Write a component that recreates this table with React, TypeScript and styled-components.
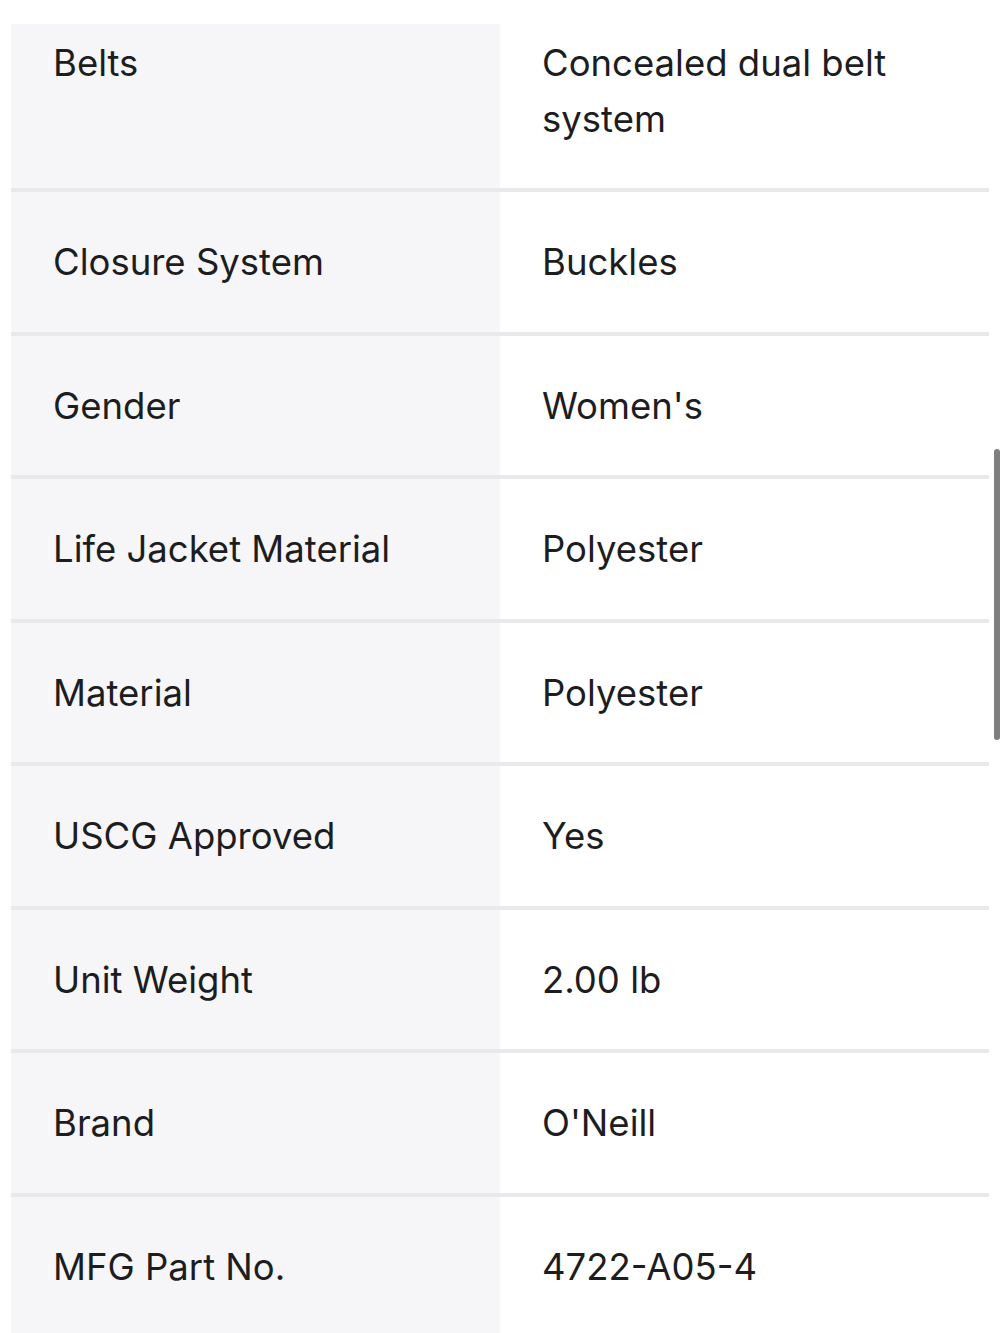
import React from "react";
import styled, { createGlobalStyle } from "styled-components";

const Global = createGlobalStyle`
  html, body { margin: 0; padding: 0; background: #ffffff; }
  body { font-family: Inter, "Noto Sans", "Liberation Sans", sans-serif; overflow: hidden; }
`;

const Page = styled.div`
  position: relative;
  height: 1333px;
  overflow: hidden;
  padding: 24px 11px 0 11px;
  box-sizing: border-box;
`;

const Table = styled.div`
  display: flex;
  flex-direction: column;
`;

const Row = styled.div<{ $last?: boolean }>`
  display: grid;
  grid-template-columns: 489px 1fr;
  border-bottom: ${(p) => (p.$last ? "none" : "4px solid #e9e9eb")};
`;

const Cell = styled.div<{ $label?: boolean; $first?: boolean }>`
  background: ${(p) => (p.$label ? "#f6f6f8" : "#ffffff")};
  padding: ${(p) => (p.$first ? "12px" : "43px")} 42px 41px 42px;
  font-size: 36.5px;
  line-height: 55.5px;
  color: #1d1d1f;
  letter-spacing: 0;
`;

const Scrollbar = styled.div`
  position: absolute;
  right: 0;
  top: 449px;
  width: 6px;
  height: 291px;
  border-radius: 3px;
  background: #7f7f7f;
`;

const rows: [string, string][] = [
  ["Belts", "Concealed dual belt system"],
  ["Closure System", "Buckles"],
  ["Gender", "Women's"],
  ["Life Jacket Material", "Polyester"],
  ["Material", "Polyester"],
  ["USCG Approved", "Yes"],
  ["Unit Weight", "2.00 lb"],
  ["Brand", "O'Neill"],
  ["MFG Part No.", "4722-A05-4"],
];

export default function App() {
  return (
    <>
      <Global />
      <Page>
        <Table>
          {rows.map(([k, v], i) => (
            <Row key={k} $last={i === rows.length - 1}>
              <Cell $label $first={i === 0}>{k}</Cell>
              <Cell $first={i === 0}>{v}</Cell>
            </Row>
          ))}
        </Table>
        <Scrollbar />
      </Page>
    </>
  );
}
